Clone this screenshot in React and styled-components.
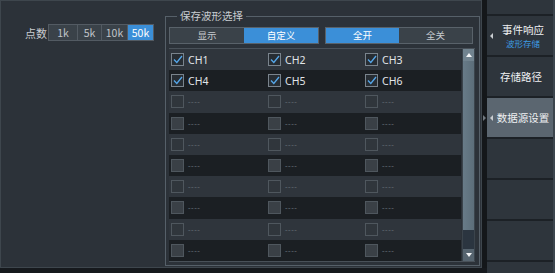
import React, { useState } from "react"
import styled, { createGlobalStyle } from 'styled-components'

const GlobalStyle = createGlobalStyle`
    html, body {
        margin: 0;
        padding: 0;
        background: #16191d;
        font-family: "Noto Sans CJK SC", "Noto Sans", sans-serif;
    }
`

const Screen = styled.div`
    display: flex;
    width: 555px;
    height: 273px;
    background: #16191d;
    overflow: hidden;
`

const Main = styled.div`
    display: flex;
    box-sizing: border-box;
    width: 482px;
    height: 268px;
    background: #2c3239;
    border: 1px solid #3e464d;
`

const LeftPane = styled.div`
    width: 164px;
    padding: 23px 0 0 24px;
    box-sizing: border-box;
`

const PointsRow = styled.div`
    display: flex;
    align-items: center;
`

const Label = styled.span`
    color: #c9cdd1;
    font-size: 11px;
    margin-right: 1px;
`

const Segment = styled.div`
    display: flex;
    border: 1px solid #535b63;
`

const SegButton = styled.button`
    width: ${p => p.$w}px;
    height: 15px;
    padding: 0;
    border: none;
    border-left: ${p => p.$first ? 'none' : '1px solid #535b63'};
    background: ${p => p.$active ? '#3b8fd8' : '#3a4249'};
    color: ${p => p.$active ? '#ffffff' : '#c0c5ca'};
    font-family: inherit;
    font-size: 10.5px;
    line-height: 15px;
`

const Group = styled.fieldset`
    margin: 8px 0 0 0;
    padding: 0 3px;
    width: 315px;
    height: 257px;
    box-sizing: border-box;
    border: 1px solid #566069;
    min-width: 0;
`

const Legend = styled.legend`
    margin-left: 8px;
    padding: 0 3px;
    color: #c9cdd1;
    font-size: 10.5px;
    line-height: 14px;
`

const TabRow = styled.div`
    display: flex;
    gap: 6px;
    margin-top: 4px;
`

const TabGroup = styled.div`
    display: flex;
    border: 1px solid #59626a;
`

const Tab = styled.button`
    width: ${p => p.$w}px;
    height: 15px;
    padding: 0;
    border: none;
    background: ${p => p.$active ? '#3b8fd8' : '#3a4249'};
    color: ${p => p.$active ? '#ffffff' : '#c6cacf'};
    font-family: inherit;
    font-size: 9.5px;
    line-height: 15px;
`

const TableWrap = styled.div`
    display: flex;
    margin-top: 4px;
    width: 306px;
    border-top: 1px solid #495159;
    border-bottom: 1px solid #495159;
`

const Rows = styled.div`
    flex: 1;
    display: flex;
    flex-direction: column;
`

const Row = styled.div`
    display: grid;
    grid-template-columns: 97px 97px 98px;
    height: 21.2px;
    align-items: center;
    background: ${p => p.$dark ? '#1b1f23' : '#2f353c'};
`

const Cell = styled.div`
    display: flex;
    align-items: center;
    padding-left: 2px;
    gap: 4px;
`

const Box = styled.span`
    display: flex;
    align-items: center;
    justify-content: center;
    width: 11px;
    height: 11px;
    border: 1px solid ${p => p.$off ? '#4f575e' : '#7a848d'};
    background: ${p => p.$off ? (p.$dark ? '#3a4046' : '#30363c') : '#272d33'};
`

const CellText = styled.span`
    font-family: "Noto Sans", sans-serif;
    font-size: ${p => p.$off ? 8 : 10.5}px;
    color: ${p => p.$off ? '#5d646b' : '#e2e5e8'};
    letter-spacing: ${p => p.$off ? '0.5px' : '0'};
`

const Scroll = styled.div`
    display: flex;
    flex-direction: column;
    width: 12px;
    margin-left: 1px;
    border-left: 1px solid #3b444c;
    border-right: 1px solid #3b444c;
`

const ScrollBtn = styled.div`
    height: 12px;
    display: flex;
    align-items: center;
    justify-content: center;
    background: ${p => p.$bg};
`

const Thumb = styled.div`
    flex: 1;
    background: linear-gradient(90deg, #687b88, #5c6e7a);
`

const Track = styled.div`
    height: 19px;
    background: #2b3540;
`

const Divider = styled.div`
    width: 5px;
    height: 268px;
    background: #14171a;
`

const Sidebar = styled.div`
    display: flex;
    flex-direction: column;
    width: 66px;
    height: 273px;
    background: #2e353c;
    border-right: 2px solid #3c454d;
`

const SideItem = styled.div`
    position: relative;
    box-sizing: border-box;
    height: ${p => p.$h || 41}px;
    flex-shrink: 0;
    display: flex;
    flex-direction: column;
    align-items: center;
    justify-content: center;
    padding-left: ${p => p.$pad || 0}px;
    background: ${p => p.$active ? '#5b6670' : '#2e353c'};
    border-bottom: 2px solid #1c2126;
`

const SideTitle = styled.span`
    color: #eef0f2;
    font-size: 10.5px;
    line-height: 14px;
`

const SideSub = styled.span`
    color: #3d9ae2;
    font-size: 8.5px;
    line-height: 12px;
`

const Caret = styled.span`
    position: absolute;
    left: 3px;
    top: 50%;
    margin-top: -3px;
    width: 0;
    height: 0;
    border-top: 3px solid transparent;
    border-bottom: 3px solid transparent;
    border-right: 3px solid #c9cdd1;
`

const Pointer = styled.span`
    position: absolute;
    left: -4px;
    top: 50%;
    margin-top: -3px;
    width: 0;
    height: 0;
    border-top: 3px solid transparent;
    border-bottom: 3px solid transparent;
    border-left: 3px solid #70787f;
`

function Check() {
    return (
        <svg width="10" height="9" viewBox="0 0 10 9">
            <path d="M1 4.5 L3.8 7.5 L9 1" fill="none" stroke="#55a7ea" strokeWidth="1.3" />
        </svg>
    )
}

function Arrow({ up }) {
    return (
        <svg width="6" height="4" viewBox="0 0 6 4">
            <path d={up ? "M0 4 L3 0 L6 4 Z" : "M0 0 L3 4 L6 0 Z"} fill="#f2f4f6" />
        </svg>
    )
}

const channels = [
    ['CH1', 'CH2', 'CH3'],
    ['CH4', 'CH5', 'CH6'],
]

const pointOptions = [
    { key: '1k', w: 28 },
    { key: '5k', w: 24 },
    { key: '10k', w: 26 },
    { key: '50k', w: 26 },
]

export default function App() {
    const [points, setPoints] = useState('50k')
    const [mode, setMode] = useState('custom')
    const [all, setAll] = useState('on')

    const rows = []
    for (let i = 0; i < 10; i++) {
        rows.push(channels[i] || null)
    }

    return (
        <>
            <GlobalStyle />
            <Screen>
                <Main>
                    <LeftPane>
                        <PointsRow>
                            <Label>点数</Label>
                            <Segment>
                                {pointOptions.map((p, i) => (
                                    <SegButton key={p.key} $first={i === 0} $w={p.w}
                                        $active={points === p.key} onClick={() => setPoints(p.key)}>{p.key}</SegButton>
                                ))}
                            </Segment>
                        </PointsRow>
                    </LeftPane>
                    <Group>
                        <Legend>保存波形选择</Legend>
                        <TabRow>
                            <TabGroup>
                                <Tab $w={74} $active={mode === 'show'} onClick={() => setMode('show')}>显示</Tab>
                                <Tab $w={74} $active={mode === 'custom'} onClick={() => setMode('custom')}>自定义</Tab>
                            </TabGroup>
                            <TabGroup>
                                <Tab $w={73} $active={all === 'on'} onClick={() => setAll('on')}>全开</Tab>
                                <Tab $w={73} $active={all === 'off'} onClick={() => setAll('off')}>全关</Tab>
                            </TabGroup>
                        </TabRow>
                        <TableWrap>
                            <Rows>
                                {rows.map((r, i) => (
                                    <Row key={i} $dark={i % 2 === 1}>
                                        {[0, 1, 2].map(c => (
                                            <Cell key={c}>
                                                <Box $off={!r} $dark={i % 2 === 1}>{r && <Check />}</Box>
                                                <CellText $off={!r}>{r ? r[c] : '----'}</CellText>
                                            </Cell>
                                        ))}
                                    </Row>
                                ))}
                            </Rows>
                            <Scroll>
                                <ScrollBtn $bg="#71838f"><Arrow up /></ScrollBtn>
                                <Thumb />
                                <Track />
                                <ScrollBtn $bg="#56646f"><Arrow /></ScrollBtn>
                            </Scroll>
                        </TableWrap>
                    </Group>
                </Main>
                <Divider />
                <Sidebar>
                    <SideItem $h={16} />
                    <SideItem $pad={6}>
                        <Caret />
                        <SideTitle>事件响应</SideTitle>
                        <SideSub>波形存储</SideSub>
                    </SideItem>
                    <SideItem $pad={2}>
                        <SideTitle>存储路径</SideTitle>
                    </SideItem>
                    <SideItem $pad={6} $active>
                        <Pointer />
                        <Caret />
                        <SideTitle>数据源设置</SideTitle>
                    </SideItem>
                    <SideItem />
                    <SideItem />
                    <SideItem />
                    <SideItem $h={20} />
                </Sidebar>
            </Screen>
        </>
    )
}
